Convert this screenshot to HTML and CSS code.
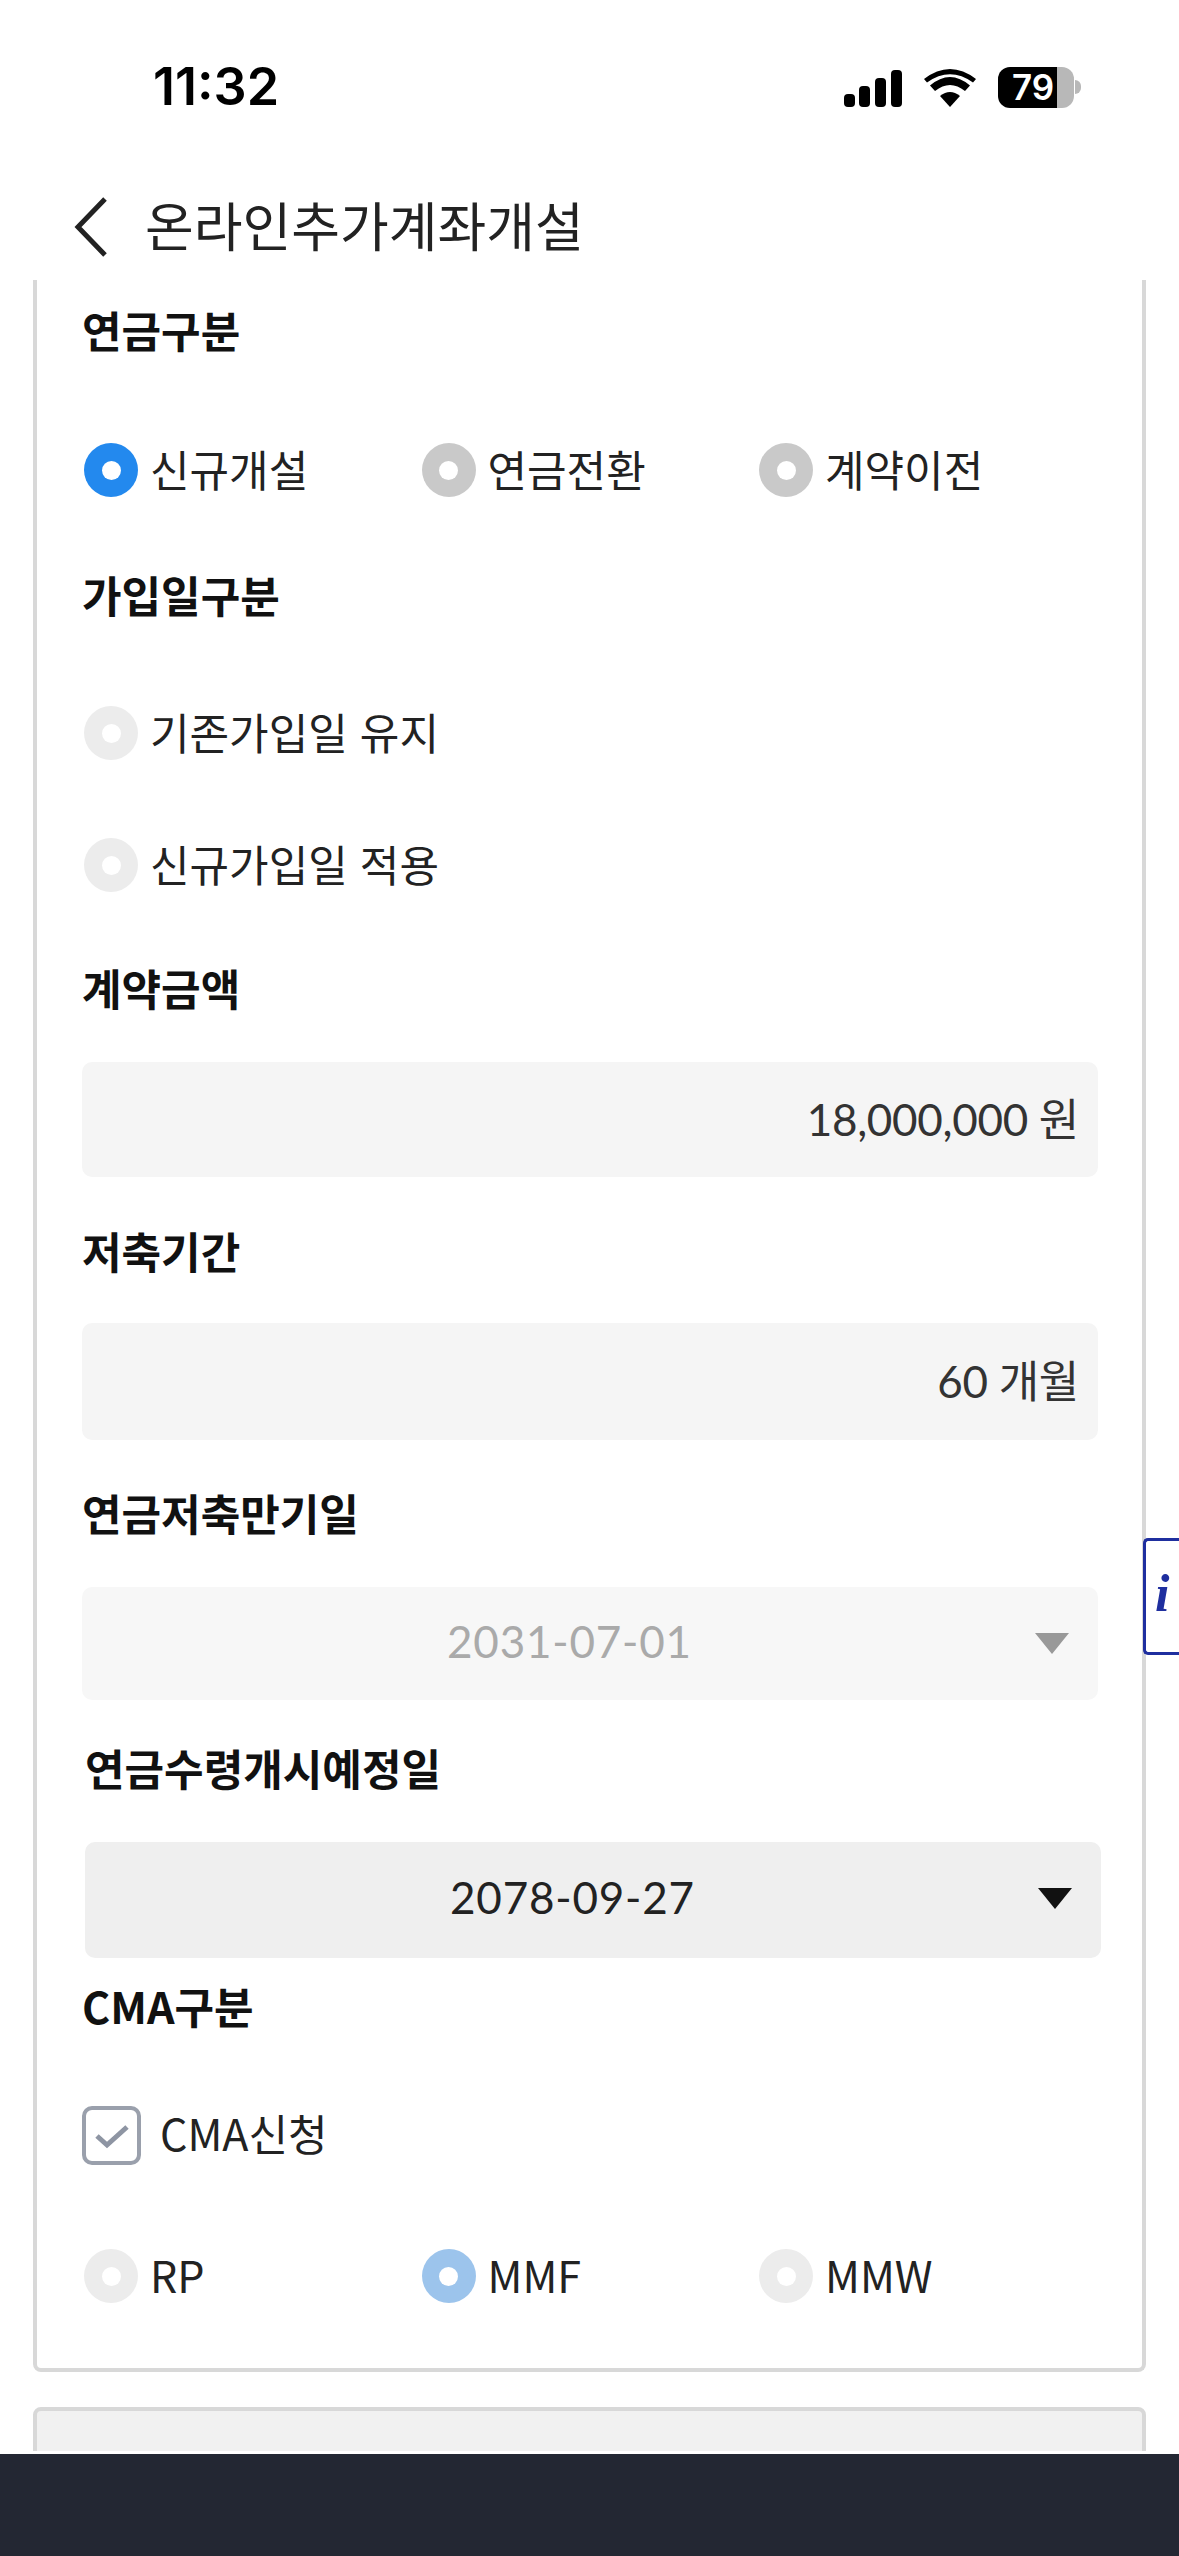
FILE: index.html
```html
<!DOCTYPE html>
<html lang="ko">
<head>
<meta charset="UTF-8">
<title>온라인추가계좌개설</title>
<link rel="stylesheet" href="styles.css">
</head>
<body>
<div id="page">
	<div class="status">
		<span class="time">11:32</span>
		<div class="status-icons">
			<svg class="signal" width="58" height="37" viewBox="0 0 58 37">
				<rect x="0" y="24" width="11" height="13" rx="4"/>
				<rect x="15" y="16" width="11" height="21" rx="4"/>
				<rect x="31" y="8" width="11" height="29" rx="4"/>
				<rect x="47" y="0" width="11" height="37" rx="4"/>
			</svg>
			<svg class="wifi" width="52" height="38" viewBox="0 0 52 38">
				<path d="M26 38 L16 27 Q26 19 36 27 Z"/>
				<path d="M11 22 L6 16.500 Q26 -0.500 46 16.500 L41 22 Q26 10 11 22 Z"/>
				<path d="M3 13.500 L0 10 Q26 -10 52 10 L49 13.500 Q26 -3 3 13.500 Z"/>
			</svg>
			<div class="battery"><span>79</span></div>
			<i class="battery-tip"></i>
		</div>
	</div>

	<div class="header">
		<svg class="back" width="36" height="62" viewBox="0 0 36 62">
			<polyline points="32,3 5,31 32,59" fill="none" stroke="#222" stroke-width="5"/>
		</svg>
		<h1>온라인추가계좌개설</h1>
	</div>

	<div class="main">
		<div class="card">
			<h2 class="label">연금구분</h2>
			<div class="radios gap-81">
				<label class="radio"><i class="dot on"></i>신규개설</label>
				<label class="radio"><i class="dot off"></i>연금전환</label>
				<label class="radio"><i class="dot off"></i>계약이전</label>
			</div>

			<h2 class="label gap-70">가입일구분</h2>
			<label class="radio gap-79"><i class="dot dim"></i>기존가입일 유지</label>
			<label class="radio gap-78"><i class="dot dim"></i>신규가입일 적용</label>

			<h2 class="label gap-68">계약금액</h2>
			<div class="input gap-42 h-115">18,000,000 원</div>

			<h2 class="label gap-46">저축기간</h2>
			<div class="input gap-40 h-117">60 개월</div>

			<h2 class="label gap-45">연금저축만기일</h2>
			<div class="select disabled gap-42 h-113">2031-07-01<i class="arrow"></i></div>

			<h2 class="label shift gap-40">연금수령개시예정일</h2>
			<div class="select shift gap-42 h-116">2078-09-27<i class="arrow"></i></div>

			<h2 class="label gap-20">CMA구분</h2>
			<label class="check gap-68">
				<i class="box">
					<svg width="36" height="28" viewBox="0 0 36 28">
						<polyline points="3,14 13,23 33,5" fill="none" stroke="#8e95a3" stroke-width="5"/>
					</svg>
				</i>
				CMA신청
			</label>
			<div class="radios gap-84">
				<label class="radio"><i class="dot dim"></i>RP</label>
				<label class="radio"><i class="dot light"></i>MMF</label>
				<label class="radio"><i class="dot dim"></i>MMW</label>
			</div>
		</div>

		<div class="card2"></div>

		<a class="info">i</a>
	</div>

	<div class="footer"></div>
</div>
</body>
</html>
```

FILE: styles.css
```css
*{
	margin: 0;
	padding: 0;
	box-sizing: border-box;
}
body{
	background: #fff;
	color: #222;
	font-family: "Noto Sans CJK KR", "Noto Sans", sans-serif;
	overflow: hidden;
}
#page{
	width: 1179px;
	height: 2556px;
	display: flex;
	flex-direction: column;
}

/* status bar */
.status{
	height: 174px;
	flex: none;
	padding: 61px 98px 0 153px;
	display: flex;
	justify-content: space-between;
	align-items: flex-start;
}
.time{
	font-family: Inter, sans-serif;
	font-size: 52px;
	line-height: 52px;
	font-weight: 600;
	color: #000;
}
.status-icons{
	display: flex;
	align-items: center;
	height: 52px;
}
.signal{ fill: #000; margin-top: 2px; }
.wifi{ fill: #000; margin: 2px 22px 0; }
.battery{
	width: 76px;
	height: 41px;
	border-radius: 12px;
	background: linear-gradient(to right, #000 59px, #b8b8b8 59px);
	padding-left: 14px;
	color: #fff;
	font-family: Inter, sans-serif;
	font-size: 35px;
	line-height: 41px;
	font-weight: 600;
}
.battery-tip{
	width: 6px;
	height: 14px;
	background: #b8b8b8;
	border-radius: 0 7px 7px 0;
	margin-left: 1px;
}

/* header */
.header{
	height: 106px;
	flex: none;
	padding-left: 73px;
	display: flex;
	align-items: center;
}
.back{ margin-right: 36px; }
.header h1{
	font-size: 53px;
	font-weight: 400;
	color: #222;
	line-height: 70px;
	padding-bottom: 6px;
}

/* content */
.main{
	height: 2171px;
	flex: none;
	position: relative;
	overflow: hidden;
	padding: 0 33px;
}
.card{
	height: 2092px;
	border: 4px solid #d8d8d8;
	border-top: 0;
	border-radius: 0 0 8px 8px;
	padding: 22px 0 0 45px;
}
.card2{
	height: 100px;
	margin-top: 35px;
	background: #f1f1f1;
	border: 4px solid #d8d8d8;
	border-radius: 8px 8px 0 0;
}
.label{
	font-size: 43px;
	line-height: 54px;
	padding-bottom: 6px;
	font-weight: 700;
	color: #111;
	display: block;
}
.radios{
	display: grid;
	grid-template-columns: 337.5px 337.5px 337.5px;
}
.radio{
	display: flex;
	align-items: flex-start;
	height: 54px;
	font-size: 43px;
	line-height: 50px;
	color: #222;
	padding-left: 2px;
}
.dot{
	width: 54px;
	height: 54px;
	border-radius: 50%;
	margin-right: 12px;
	flex: none;
	display: flex;
	align-items: center;
	justify-content: center;
}
.dot::after{
	content: "";
	width: 19px;
	height: 19px;
	border-radius: 50%;
	background: #fff;
}
.dot.on{ background: #2389ee; }
.dot.off{ background: #c9c9c9; }
.dot.dim{ background: #ececec; }
.dot.light{ background: #9cc4ec; }

.input, .select{
	width: 1016px;
	border-radius: 10px;
	font-family: Lato, "Noto Sans CJK KR", sans-serif;
	font-size: 44px;
	color: #333;
	display: flex;
	align-items: center;
	padding-bottom: 6px;
}
.input{
	background: #f5f5f5;
	justify-content: flex-end;
	padding-right: 19px;
	letter-spacing: -0.3px;
}
.select{
	background: #efefef;
	color: #222;
	padding-left: 365px;
	letter-spacing: 0.8px;
	position: relative;
}
.select.disabled{
	background: #f7f7f7;
	color: #aaa;
}
.arrow{
	position: absolute;
	right: 29px;
	top: 46px;
	border-top: 21px solid #111;
	border-left: 17px solid transparent;
	border-right: 17px solid transparent;
}
.select.disabled .arrow{
	border-top-color: #999;
}
.shift{ margin-left: 3px; }

.check{
	display: flex;
	align-items: flex-start;
	height: 59px;
	font-size: 43px;
	line-height: 53px;
	color: #222;
}
.box{
	width: 59px;
	height: 59px;
	border: 4px solid #9aa0ac;
	border-radius: 10px;
	margin-right: 19px;
	display: flex;
	align-items: center;
	justify-content: center;
}

/* floating info tab */
.info{
	position: absolute;
	right: 0;
	top: 1258px;
	width: 36px;
	height: 117px;
	background: #fff;
	border: 3px solid #1f2f9f;
	border-right: 0;
	border-radius: 5px 0 0 5px;
	padding-left: 9px;
	font-family: "Liberation Serif", serif;
	font-style: italic;
	font-weight: 700;
	font-size: 52px;
	line-height: 106px;
	color: #1f2f9f;
}

.footer{
	height: 102px;
	margin-top: 3px;
	flex: none;
	background: #232733;
}

/* gaps between the form rows */
.gap-20{ margin-top: 20px; }
.gap-40{ margin-top: 40px; }
.gap-42{ margin-top: 42px; }
.gap-45{ margin-top: 45px; }
.gap-46{ margin-top: 46px; }
.gap-68{ margin-top: 68px; }
.gap-70{ margin-top: 70px; }
.gap-78{ margin-top: 78px; }
.gap-79{ margin-top: 79px; }
.gap-81{ margin-top: 81px; }
.gap-84{ margin-top: 84px; }
.h-113{ height: 113px; }
.h-115{ height: 115px; }
.h-116{ height: 116px; }
.h-117{ height: 117px; }
```
